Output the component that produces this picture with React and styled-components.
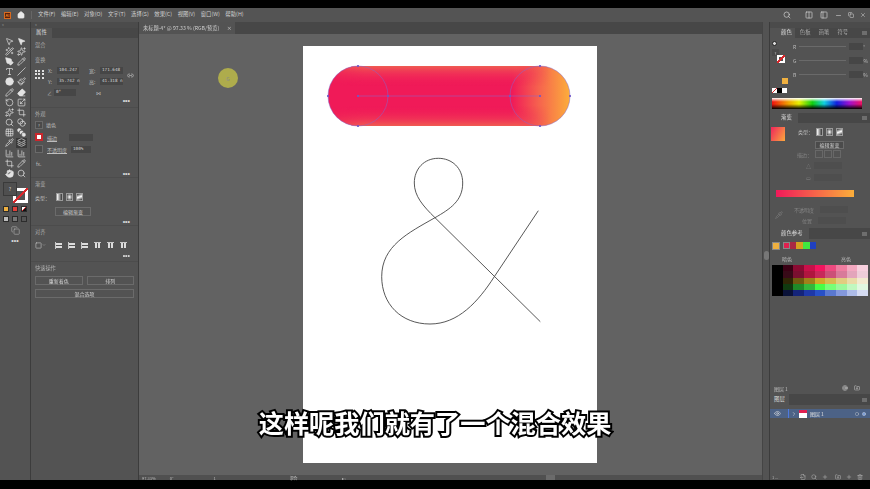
import React from "react"
import styled, { createGlobalStyle } from "styled-components"
import {
  MousePointer2, Wand2, PenTool, Pencil, Type, Slash, Circle, Paintbrush, Eraser, RotateCcw,
  Scaling, Sparkles, Grid3x3, SquareStack, Pipette, Blend, ChartColumn, BarChart3, Crop, Hand, Search,
  Link2, Eye, ChevronRight, ChevronDown, Square, Minus, X, Home, Copy, Columns2, PanelLeft,
  Plus, Trash2, FolderPlus, FileOutput, Layers, Target,
} from "lucide-react"

const GlobalStyle = createGlobalStyle`
  html, body { margin: 0; padding: 0; background: #000; overflow: hidden; }
  * { box-sizing: border-box; }
  body { font-family: "Noto Sans CJK SC", "Liberation Sans", sans-serif; }
`

const Page = styled.div`
  position: relative;
  width: 870px;
  height: 489px;
  display: flex;
  flex-direction: column;
  background: #000;
  overflow: hidden;
`

const Window = styled.div`
  margin-top: 8px;
  height: 472px;
  display: flex;
  flex-direction: column;
  background: #535353;
  color: #c8c8c8;
  font-size: 5px;
  line-height: 1;
  filter: blur(0.3px);
`

const MenuBar = styled.div`
  height: 14px;
  display: flex;
  align-items: center;
  background: #545454;
  padding-left: 4px;
`

const AiLogo = styled.div`
  width: 7px;
  height: 7px;
  background: #5c1f08;
  border: 1px solid #d96a1e;
  color: #f08a2a;
  font-size: 4px;
  font-weight: 700;
  display: flex;
  align-items: center;
  justify-content: center;
`

const HomeWrap = styled.div`
  width: 21px;
  display: flex;
  justify-content: center;
  color: #e8e8e8;
  border-right: 1px solid #666;
  margin-right: 6px;
`

const MenuItem = styled.span`
  margin-right: 5.5px;
  font-size: 5.4px;
  color: #d0d0d0;
  white-space: nowrap;
`

const MenuRight = styled.div`
  margin-left: auto;
  display: flex;
  align-items: center;
  padding-right: 4px;
  color: #d4d4d4;
`

const MenuGroup = styled.div`
  display: flex;
  align-items: center;
  gap: ${p => p.$gap || 5}px;
  margin-right: ${p => p.$right || 0}px;
`

const Body = styled.div`
  flex: 1;
  display: flex;
  min-height: 0;
`

const ToolColumn = styled.div`
  width: 31px;
  background: #535353;
  border-right: 1px solid #3c3c3c;
  display: flex;
  flex-direction: column;
  align-items: center;
`

const CollapseStrip = styled.div`
  height: 6px;
  width: 100%;
  background: #4b4b4b;
  color: #aaa;
  font-size: 4px;
  padding-left: ${p => p.$pad || 2}px;
  letter-spacing: -0.5px;
`

const ToolGrid = styled.div`
  display: grid;
  grid-template-columns: 12px 12px;
  grid-auto-rows: 10.2px;
  margin-top: 8px;
  justify-items: center;
  align-items: center;
  color: #e2e2e2;
`

const ToolBtn = styled.div`
  width: 11px;
  height: 10px;
  display: flex;
  align-items: center;
  justify-content: center;
  background: ${p => (p.$active ? "#3a3a3a" : "transparent")};
`

const FillStroke = styled.div`
  position: relative;
  width: 24px;
  height: 22px;
  margin-top: 3px;
`

const FillBox = styled.div`
  position: absolute;
  left: 0;
  top: 0;
  width: 14px;
  height: 14px;
  background: #4f4f4f;
  border: 1px solid #3a3a3a;
  color: #ccc;
  font-size: 5px;
  display: flex;
  align-items: center;
  justify-content: center;
  z-index: 1;
`

const StrokeBox = styled.div`
  position: absolute;
  right: -1px;
  bottom: 1px;
  width: 15px;
  height: 15px;
  background:
    linear-gradient(135deg, transparent 44%, #d8282c 44%, #d8282c 56%, transparent 56%),
    linear-gradient(#535353, #535353) center / 9px 9px no-repeat,
    #fff;
`

const ModeRow = styled.div`
  display: flex;
  gap: 3px;
  margin-top: ${p => p.$top || 3}px;
`

const ModeBtn = styled.div`
  width: 6px;
  height: 6px;
  border: 1px solid #2c2c2c;
  background: ${p => p.$bg};
`

const ScreenBtn = styled.div`
  margin-top: 4px;
  color: #cfcfcf;
`

const Dots = styled.div`
  height: ${p => p.$h || 8}px;
  display: flex;
  align-items: center;
  justify-content: ${p => p.$center ? "center" : "flex-end"};
  padding-right: ${p => p.$center ? 0 : 4}px;
  color: #d8d8d8;
  font-family: "Liberation Sans", sans-serif;
  font-size: 7px;
  font-weight: 700;
`

const PropsPanel = styled.div`
  width: 108px;
  background: #535353;
  border-right: 1px solid #3c3c3c;
  display: flex;
  flex-direction: column;
`

const TabRow = styled.div`
  height: ${p => p.$h || 11}px;
  margin-top: ${p => p.$top || 0}px;
  display: flex;
  background: #474747;
  flex-shrink: 0;
`

const Tab = styled.div`
  padding: 0 ${p => p.$pad || 4}px 0 ${p => p.$lead || p.$pad || 4}px;
  display: flex;
  align-items: center;
  background: ${p => (p.$on ? "#535353" : "transparent")};
  color: ${p => (p.$on ? "#dedede" : "#a5a5a5")};
  font-size: 5.4px;
`

const PanelMenu = styled.div`
  margin: auto 3px auto auto;
  width: 5px;
  height: 4px;
  background: #6e6e6e;
`

const Section = styled.div`
  height: ${p => p.$h}px;
  padding: ${p => p.$top || 0}px 4px 0 4px;
  border-bottom: ${p => (p.$line ? "1px solid #4c4c4c" : "none")};
`

const Title = styled.div`
  color: #adadad;
  font-size: 5.2px;
  height: 7px;
`

const Row = styled.div`
  display: flex;
  align-items: center;
  gap: ${p => p.$gap || 3}px;
  height: ${p => p.$h || 9}px;
  margin-top: ${p => p.$top || 0}px;
  padding-left: ${p => p.$left || 0}px;
  padding-right: ${p => p.$right || 0}px;
`

const Label = styled.span`
  color: ${p => p.$dim ? "#858585" : "#bdbdbd"};
  font-size: 5px;
  width: ${p => (p.$w ? p.$w + "px" : "auto")};
  margin-left: ${p => p.$ml || 0}px;
  text-decoration: ${p => (p.$under ? "underline" : "none")};
  white-space: nowrap;
`

const Input = styled.div`
  width: ${p => p.$w || 22}px;
  height: ${p => p.$h || 7}px;
  margin-left: ${p => p.$ml || 0}px;
  background: ${p => p.$ghost ? "#4e4e4e" : "#464646"};
  color: #d4d4d4;
  font-family: "DejaVu Sans Mono", monospace;
  font-size: 4.3px;
  white-space: nowrap;
  display: flex;
  align-items: center;
  padding-left: 2px;
`

const RefPoint = styled.div`
  width: 9px;
  height: 9px;
  display: grid;
  grid-template-columns: repeat(3, 1fr);
  gap: 1px;
  align-items: center;
  justify-items: center;
  position: relative;
  top: 5px;
  span { width: 2px; height: 2px; background: #e0e0e0; }
`

const TransformRows = styled.div`
  flex: 1;
`

const TransformWrap = styled.div`
  display: flex;
  gap: 4px;
  margin-top: 1px;
`

const SwatchIcon = styled.div`
  width: 8px;
  height: 8px;
  border: ${p => p.$stroke ? "2px solid #c9262c" : "1px solid #6a6a6a"};
  background: ${p => p.$stroke ? "#fff" : "#4a4a4a"};
  color: #ccc;
  font-size: 4px;
  display: flex;
  align-items: center;
  justify-content: center;
`

const GradType = styled.div`
  width: 7px;
  height: 8px;
  border: 1px solid #9a9a9a;
  background: ${p => p.$bg};
`

const GhostBtn = styled.div`
  height: ${p => p.$h || 9}px;
  width: ${p => (p.$w ? p.$w + "px" : "auto")};
  flex: ${p => (p.$w ? "none" : 1)};
  margin-left: ${p => p.$left || 0}px;
  border: 1px solid #6b6b6b;
  background: ${p => p.$bg || "transparent"};
  color: #d0d0d0;
  font-size: 5px;
  display: flex;
  align-items: center;
  justify-content: center;
`

const AlignIcon = styled.div`
  width: 7px;
  height: 7px;
  display: flex;
  flex-direction: ${p => (p.$v ? "row" : "column")};
  gap: 1px;
  align-items: center;
  justify-content: center;
  border-${p => (p.$v ? "top" : "left")}: 1px solid #c8c8c8;
  i { display: block; background: #dcdcdc; width: ${p => (p.$v ? "2px" : "6px")}; height: ${p => (p.$v ? "5px" : "2px")}; }
`

const Canvas = styled.div`
  flex: 1;
  display: flex;
  flex-direction: column;
  min-width: 0;
  background: #626262;
`

const DocTabs = styled.div`
  height: 12px;
  display: flex;
  background: #474747;
`

const DocTab = styled.div`
  width: 96px;
  background: #535353;
  display: flex;
  align-items: center;
  justify-content: space-between;
  padding: 0 3px 0 4px;
  color: #cfcfcf;
  font-size: 5.2px;
  white-space: nowrap;
`

const Stage = styled.div`
  flex: 1;
  position: relative;
  padding: 12px 0 0 164px;
  min-height: 0;
`

const Artboard = styled.div`
  width: 294px;
  height: 417px;
  background: #fff;
`

const ClickMark = styled.div`
  position: absolute;
  left: 79px;
  top: 34px;
  width: 20px;
  height: 20px;
  border-radius: 50%;
  background: #aeac4c;
  color: #888;
  font-size: 5px;
  display: flex;
  align-items: center;
  justify-content: center;
`

const StatusBar = styled.div`
  height: 5px;
  display: flex;
  align-items: center;
  background: #505050;
  color: #bcbcbc;
  font-size: 4px;
  padding-left: 3px;
`

const StatusText = styled.span`
  margin-right: ${p => p.$right}px;
  white-space: nowrap;
`

const StatusThumb = styled.div`
  width: 9px;
  height: 5px;
  background: #6b6b6b;
`

const Gutter = styled.div`
  width: 7px;
  background: #535353;
  border-left: 1px solid #454545;
  position: relative;
`

const GutterThumb = styled.div`
  position: absolute;
  left: 1px;
  top: 229px;
  width: 5px;
  height: 9px;
  border-radius: 3px;
  background: #777;
`

const RightDock = styled.div`
  width: 101px;
  border-left: 1px solid #3c3c3c;
  background: #535353;
  display: flex;
  flex-direction: column;
`

const ColorHead = styled.div`
  display: flex;
  margin-top: 1px;
`

const ColorIcons = styled.div`
  width: 23px;
  display: flex;
  flex-direction: column;
  padding: 2px 0 0 2px;
`

const FillDot = styled.div`
  width: 5px;
  height: 5px;
  border-radius: 50%;
  background: #ddd;
  border: 1px solid #222;
`

const QuestionBox = styled.div`
  width: 7px;
  height: 7px;
  margin-top: 3px;
  background: #4a4a4a;
  color: #ccc;
  font-size: 4px;
  display: flex;
  align-items: center;
  justify-content: center;
`

const StrokeMini = styled.div`
  width: 8px;
  height: 8px;
  margin: -1px 0 0 5px;
  background:
    linear-gradient(135deg, transparent 38%, #d8282c 38%, #d8282c 62%, transparent 62%),
    linear-gradient(#535353, #535353) center / 4px 4px no-repeat,
    #fff;
`

const Sliders = styled.div`
  flex: 1;
`

const SliderRow = styled.div`
  display: flex;
  align-items: center;
  height: 14px;
`

const SliderTrack = styled.div`
  width: 47px;
  height: 1px;
  background: #6a6a6a;
  margin: 0 3px;
`

const Spectrum = styled.div`
  height: 11px;
  margin: 5px 8px 0 2px;
  background:
    linear-gradient(to bottom, #fff 0, rgba(255,255,255,0) 35%, rgba(0,0,0,0) 55%, #000 100%),
    linear-gradient(to right, #f01010 0, #f0a000 18%, #e8f000 30%, #10d010 45%, #10d0e0 58%, #1020e0 72%, #a010d0 86%, #f01060 100%);
`

const MiniSwatch = styled.div`
  width: ${p => p.$w || 5}px;
  height: ${p => p.$h || 5}px;
  margin-left: ${p => p.$ml || 0}px;
  background: ${p => p.$bg};
  border: ${p => p.$line ? "1px solid #888" : "none"};
`

const GradHead = styled.div`
  display: flex;
  padding: 4px 0 0 1px;
  height: 25px;
`

const GradSwatch = styled.div`
  width: 14px;
  height: 14px;
  background: linear-gradient(120deg, #f0245c, #fba93c);
`

const GradControls = styled.div`
  margin-left: 13px;
`

const GradBar = styled.div`
  margin: 7px 0 7px 6px;
  width: 78px;
  height: 7px;
  background: linear-gradient(90deg, #f0195a, #fbae3a);
`

const FadedBtn = styled.div`
  width: 8px;
  height: 8px;
  border: 1px solid #686868;
`

const PickRows = styled.div`
  display: flex;
  align-items: center;
  height: 21px;
  color: #787878;
  padding-left: 5px;
`

const PickBody = styled.div`
  flex: 1;
  padding-left: 11px;
`

const GuideGrid = styled.div`
  display: grid;
  grid-template-columns: repeat(9, 1fr);
  grid-auto-rows: 6.3px;
  width: 96px;
  margin-left: 2px;
`

const LayerRow = styled.div`
  height: 9px;
  display: flex;
  align-items: center;
  background: #4c6286;
  margin-top: 4px;
  color: #e0e0e0;
  padding-left: 4px;
  font-size: 5px;
`

const LayerBar = styled.div`
  width: 1px;
  height: 9px;
  margin-left: 7px;
  background: #4f7ae0;
`

const LayerThumb = styled.div`
  width: 8px;
  height: 8px;
  background: linear-gradient(#e02050 35%, #fff 35%);
  margin: 0 3px 0 2px;
`

const LayerFoot = styled.div`
  margin-top: auto;
  height: 6px;
  display: flex;
  align-items: center;
  gap: 5px;
  color: #b4b4b4;
  padding-left: 2px;
  font-size: 4px;
`

const Caption = styled.div`
  position: absolute;
  left: 0;
  right: 0;
  top: 405px;
  text-align: center;
  font-family: "Noto Sans CJK SC", sans-serif;
  font-size: 25.2px;
  font-weight: 700;
  line-height: 34px;
  color: #fff;
  -webkit-text-stroke: 4px #000;
  paint-order: stroke fill;
`

const menus = ["文件(F)", "编辑(E)", "对象(O)", "文字(T)", "选择(S)", "效果(C)", "视图(V)", "窗口(W)", "帮助(H)"]

const tools = [
  [MousePointer2], [MousePointer2, true], [Wand2], [Sparkles], [PenTool, true], [Pencil], [Type], [Slash], [Circle, true], [Paintbrush],
  [Pencil], [Eraser, true], [RotateCcw], [Scaling], [Sparkles], [Crop], [Search], [Blend], [Grid3x3], [SquareStack, true],
  [Pipette], [Layers], [BarChart3], [ChartColumn], [Crop], [Pencil], [Hand, true], [Search],
]

const guide = [
  ["#000", "#3a0014", "#8a0a32", "#c8104a", "#f2155f", "#ee4a80", "#ee7da0", "#f3a8c0", "#f7d0de"],
  ["#000", "#380a18", "#7a1030", "#b0153f", "#c8285a", "#cc5078", "#d87a9a", "#e3a5bb", "#eecdd9"],
  ["#000", "#2e2505", "#705a10", "#a0801a", "#d2a928", "#d8bb50", "#e2cc80", "#eadba8", "#f2ead0"],
  ["#000", "#103a10", "#1f8a28", "#35b83c", "#48ff48", "#78ff78", "#9cf89c", "#c0f8c0", "#e0f8e0"],
  ["#000", "#0a1238", "#14247a", "#1e38a8", "#2850c8", "#5a78d0", "#8498dc", "#aebce8", "#d6dcf2"],
]

const gradTypes = [
  "linear-gradient(90deg,#fff,#333)",
  "radial-gradient(#fff,#333)",
  "linear-gradient(160deg,#333,#fff 50%,#333)",
]

const TransformRow = ({ a, av, b, bv }) => (
  <Row $h={11} $gap={2}>
    <Label $w={7}>{a}</Label>
    <Input $w={22}>{av}</Input>
    <Label $w={9} $ml={8}>{b}</Label>
    <Input $w={23}>{bv}</Input>
  </Row>
)

const GradientTypes = () => (
  <>
    {gradTypes.map((g, i) => <GradType key={i} $bg={g} />)}
  </>
)

const ToolPanel = () => (
  <ToolColumn>
    <CollapseStrip>‹‹</CollapseStrip>
    <ToolGrid>
      {tools.map(([Icon, solid], i) => (
        <ToolBtn key={i} $active={i === 21}>
          <Icon size={9} strokeWidth={1.8} fill={solid ? "#e2e2e2" : "none"} />
        </ToolBtn>
      ))}
    </ToolGrid>
    <FillStroke>
      <FillBox>?</FillBox>
      <StrokeBox />
    </FillStroke>
    <ModeRow $top={2}>
      <ModeBtn $bg="#efb040" />
      <ModeBtn $bg="#e0403a" />
      <ModeBtn $bg="linear-gradient(135deg,#fff 45%,#d8282c 45%,#d8282c 55%,#111 55%)" />
    </ModeRow>
    <ModeRow $top={4}>
      <ModeBtn $bg="#bbb" />
      <ModeBtn $bg="#777" />
      <ModeBtn $bg="#555" />
    </ModeRow>
    <ScreenBtn><Copy size={9} strokeWidth={1.2} /></ScreenBtn>
    <Dots $center $h={12}>•••</Dots>
  </ToolColumn>
)

const AlignRow = () => (
  <Row $h={12} $top={3} $gap={6} $left={0}>
    <Square size={7} />
    <ChevronDown size={4} style={{ marginLeft: -6, marginRight: 3 }} />
    {[0, 0, 0, 1, 1, 1].map((v, i) => (
      <AlignIcon key={i} $v={v}><i /><i /></AlignIcon>
    ))}
  </Row>
)

const Properties = () => (
  <PropsPanel>
    <CollapseStrip $pad={4}>‹‹</CollapseStrip>
    <TabRow $h={10}>
      <Tab $on $pad={5}>属性</Tab>
    </TabRow>
    <Section $h={15} $top={4}>
      <Title>混合</Title>
    </Section>
    <Section $h={55} $top={4} $line>
      <Title>变换</Title>
      <TransformWrap>
        <RefPoint>{Array.from({ length: 9 }).map((_, i) => <span key={i} />)}</RefPoint>
        <TransformRows>
          <TransformRow a="X:" av="104.247" b="宽:" bv="171.648" />
          <TransformRow a="Y:" av="35.742 n" b="高:" bv="41.318 n" />
        </TransformRows>
        <Link2 size={7} style={{ marginTop: 7 }} />
      </TransformWrap>
      <Row $h={10} $left={12} $gap={2}>
        <Label>∠</Label>
        <Input $w={22}>0°</Input>
        <Label $ml={18}>⋈</Label>
      </Row>
      <Dots $h={7}>•••</Dots>
    </Section>
    <Section $h={70} $top={3} $line>
      <Title>外观</Title>
      <Row $h={11} $top={1}>
        <SwatchIcon>?</SwatchIcon>
        <Label>填色</Label>
      </Row>
      <Row $h={12} $top={1} $gap={4}>
        <SwatchIcon $stroke />
        <Label $under>描边</Label>
        <Input $w={24} $h={7} $ml={8} />
      </Row>
      <Row $h={12} $gap={4}>
        <SwatchIcon />
        <Label $under>不透明度</Label>
        <Input $w={20} $h={7}>100%</Input>
      </Row>
      <Row $h={12} $top={2} $left={1}><Label>fx.</Label></Row>
      <Dots $h={8}>•••</Dots>
    </Section>
    <Section $h={48} $top={3} $line>
      <Title>渐变</Title>
      <Row $h={14} $top={2} $gap={3}>
        <Label style={{ marginRight: 3 }}>类型：</Label>
        <GradientTypes />
      </Row>
      <Row $h={14}><GhostBtn $w={36} $left={20}>编辑渐变</GhostBtn></Row>
      <Dots $h={7}>•••</Dots>
    </Section>
    <Section $h={36} $top={3} $line>
      <Title>对齐</Title>
      <AlignRow />
      <Dots $h={9}>•••</Dots>
    </Section>
    <Section $h={50} $top={3}>
      <Title>快速操作</Title>
      <Row $h={9} $top={4} $gap={4}>
        <GhostBtn>重新着色</GhostBtn>
        <GhostBtn>排列</GhostBtn>
      </Row>
      <Row $h={9} $top={4}><GhostBtn>混合选项</GhostBtn></Row>
    </Section>
  </PropsPanel>
)

const PillArt = () => (
  <svg width="294" height="417" viewBox="0 0 294 417" style={{ display: "block" }}>
    <defs>
      <linearGradient id="base" x1="0" x2="1" y1="0" y2="0">
        <stop offset="0" stopColor="#f01a58" />
        <stop offset="0.76" stopColor="#f01a58" />
        <stop offset="0.87" stopColor="#f6624e" />
        <stop offset="1" stopColor="#fcae3b" />
      </linearGradient>
      <linearGradient id="edge" x1="0" x2="0" y1="0" y2="1">
        <stop offset="0" stopColor="#ef5c52" />
        <stop offset="0.12" stopColor="#f03c56" stopOpacity="0.7" />
        <stop offset="0.34" stopColor="#f01a58" stopOpacity="0" />
        <stop offset="0.66" stopColor="#f01a58" stopOpacity="0" />
        <stop offset="0.88" stopColor="#f03c56" stopOpacity="0.7" />
        <stop offset="1" stopColor="#ef5c52" />
      </linearGradient>
      <linearGradient id="fade" x1="0" x2="1" y1="0" y2="0">
        <stop offset="0" stopColor="#fff" stopOpacity="0.5" />
        <stop offset="0.15" stopColor="#fff" />
        <stop offset="0.78" stopColor="#fff" />
        <stop offset="0.92" stopColor="#fff" stopOpacity="0" />
      </linearGradient>
      <mask id="edgeMask"><rect x="25" y="20" width="242" height="60" fill="url(#fade)" /></mask>
    </defs>
    <rect x="25" y="20" width="242" height="60" rx="30" fill="url(#base)" />
    <rect x="25" y="20" width="242" height="60" rx="30" fill="url(#edge)" mask="url(#edgeMask)" />
    <g fill="none" stroke="#8468d0" strokeWidth="0.7" opacity="0.7">
      <circle cx="55" cy="50" r="30" />
      <circle cx="237" cy="50" r="30" />
      <path d="M55 50H237" />
    </g>
    <g fill="#6f58c8" opacity="0.85">
      {[[55, 20], [55, 80], [25, 50], [85, 50], [55, 50], [237, 20], [237, 80], [207, 50], [267, 50], [237, 50]].map(([x, y]) => (
        <rect key={x + "-" + y} x={x - 1} y={y - 1} width="2" height="2" />
      ))}
    </g>
    <path
      d="M235.3 164.7 L191.3 230.7 C175 256 155 278 127 278 C98 278 78.7 258 78.7 230.7 C78.7 200 105 187 132 171.7 C147 163 159.7 155 159.7 137 C159.7 122 149 112.3 135.3 112.3 C121 112.3 111.3 123 111.3 137 C111.3 150 120 160 132 171.7 L237.3 275.7"
      fill="none"
      stroke="#444"
      strokeWidth="0.9"
    />
  </svg>
)

const ColorPanel = () => (
  <>
    <CollapseStrip />
    <TabRow $h={10}>
      <Tab $on $lead={11} $pad={3}>颜色</Tab>
      <Tab $pad={5}>色板</Tab>
      <Tab $pad={3}>画笔</Tab>
      <Tab $pad={5}>符号</Tab>
      <PanelMenu />
    </TabRow>
    <ColorHead>
      <ColorIcons>
        <FillDot />
        <QuestionBox>?</QuestionBox>
        <StrokeMini />
      </ColorIcons>
      <Sliders>
        <SliderRow><Label>R</Label><SliderTrack /><Input $w={14} $h={7} /><Label> °</Label></SliderRow>
        <SliderRow><Label>G</Label><SliderTrack /><Input $w={14} $h={7} /><Label> %</Label></SliderRow>
        <SliderRow><Label>B</Label><SliderTrack /><Input $w={14} $h={7} /><Label> %</Label></SliderRow>
      </Sliders>
    </ColorHead>
    <Row $h={6} $top={-3} $left={12}><MiniSwatch $w={6} $h={6} $bg="#efb040" /></Row>
    <Row $h={6} $top={3} $gap={0.1} $left={2}>
      <MiniSwatch $w={5} $h={5} $bg="linear-gradient(135deg,#fff 45%,#d8282c 45%,#d8282c 55%,#fff 55%)" />
      <MiniSwatch $w={5} $h={5} $bg="#000" />
      <MiniSwatch $w={5} $h={5} $bg="#fff" />
    </Row>
    <Spectrum />
  </>
)

const GradientPanel = () => (
  <>
    <TabRow $h={10} $top={4}>
      <Tab $on $lead={11} $pad={6}>渐变</Tab>
      <PanelMenu />
    </TabRow>
    <GradHead>
      <GradSwatch />
      <GradControls>
        <Row $h={9} $gap={3}>
          <Label>类型：</Label>
          <GradientTypes />
        </Row>
        <Row $h={11} $top={3} $left={17}>
          <GhostBtn $w={29} $h={8} $bg="#4b4b4b">编辑渐变</GhostBtn>
        </Row>
      </GradControls>
    </GradHead>
    <Row $h={12} $left={27} $gap={1}>
      <Label $dim>描边：</Label>
      <FadedBtn style={{ marginLeft: 2 }} /><FadedBtn /><FadedBtn />
    </Row>
    <Row $h={11} $left={36}><Label $dim>△</Label><Input $ghost $w={28} $h={7} /></Row>
    <Row $h={12} $left={36}><Label $dim>▭</Label><Input $ghost $w={28} $h={7} /></Row>
    <GradBar />
    <PickRows>
      <Pipette size={8} />
      <PickBody>
        <Row $h={11}><Label $dim>不透明度</Label><Input $ghost $w={28} $h={7} $ml={3} /></Row>
        <Row $h={10} $left={8}><Label $dim>位置</Label><Input $ghost $w={28} $h={7} $ml={3} /></Row>
      </PickBody>
    </PickRows>
  </>
)

const GuidePanel = () => (
  <>
    <TabRow $h={11} $top={3}>
      <Tab $on $lead={11} $pad={6}>颜色参考</Tab>
      <PanelMenu />
    </TabRow>
    <Row $h={13} $gap={3} $left={2}>
      <MiniSwatch $w={8} $h={8} $bg="#efb040" $line />
      <MiniSwatch $w={7} $h={7} $bg="#e0204f" $line />
      <MiniSwatch $w={6} $h={7} $bg="#a82a44" $ml={-3} />
      <MiniSwatch $w={7} $h={7} $bg="#d6a020" $ml={-3} />
      <MiniSwatch $w={7} $h={7} $bg="#40e840" $ml={-3} />
      <MiniSwatch $w={6} $h={7} $bg="#2040c0" $ml={-3} />
    </Row>
    <Row $h={13} $left={12}>
      <Label>暗色</Label>
      <Label $ml={46}>亮色</Label>
    </Row>
    <GuideGrid>
      {guide.flat().map((c, i) => <MiniSwatch key={i} $w={10.67} $h={6.3} $bg={c} />)}
    </GuideGrid>
  </>
)

const LayersPanel = () => (
  <>
    <Row $h={10} $left={4} $right={10} style={{ marginTop: "auto" }}>
      <Label>图层 1</Label>
      <Target size={6} style={{ marginLeft: "auto", marginRight: 3 }} />
      <FolderPlus size={6} />
    </Row>
    <TabRow $h={11} $top={1}>
      <Tab $on $pad={4}>图层</Tab>
      <PanelMenu />
    </TabRow>
    <LayerRow>
      <Eye size={7} />
      <LayerBar />
      <ChevronRight size={6} style={{ marginLeft: 2 }} />
      <LayerThumb />
      图层 1
      <Circle size={4} style={{ marginLeft: "auto", marginRight: 3 }} />
      <Circle size={4} fill="#7ea0d8" style={{ marginRight: 4 }} />
    </LayerRow>
    <LayerFoot style={{ marginTop: 56 }}>
      <span>1 ...</span>
      <FileOutput size={6} style={{ marginLeft: 17 }} />
      <Search size={6} />
      <Plus size={6} />
      <FolderPlus size={6} style={{ marginLeft: 2 }} />
      <Plus size={6} />
      <Trash2 size={6} />
    </LayerFoot>
  </>
)

const App = () => {
  return (
    <Page>
      <GlobalStyle />
      <Window>
        <MenuBar>
          <AiLogo>Ai</AiLogo>
          <HomeWrap><Home size={8} fill="#e8e8e8" /></HomeWrap>
          {menus.map(m => <MenuItem key={m}>{m}</MenuItem>)}
          <MenuRight>
            <MenuGroup $right={14}><Search size={8} /></MenuGroup>
            <MenuGroup $gap={7} $right={7}><Columns2 size={8} /><PanelLeft size={8} /></MenuGroup>
            <MenuGroup $gap={6}><Minus size={7} /><Copy size={6} /><X size={6} /></MenuGroup>
          </MenuRight>
        </MenuBar>
        <Body>
          <ToolPanel />
          <Properties />
          <Canvas>
            <DocTabs>
              <DocTab>未标题-4* @ 97.33 % (RGB/预览) <span>×</span></DocTab>
            </DocTabs>
            <Stage>
              <Artboard><PillArt /></Artboard>
              <ClickMark>G</ClickMark>
            </Stage>
            <StatusBar>
              <StatusText $right={14}>97.33%</StatusText>
              <StatusText $right={40}>0°</StatusText>
              <StatusText $right={74}>1</StatusText>
              <StatusText $right={44}>混合</StatusText>
              <StatusText $right={200}>▸ ‹</StatusText>
              <StatusThumb />
            </StatusBar>
          </Canvas>
          <Gutter><GutterThumb /></Gutter>
          <RightDock>
            <ColorPanel />
            <GradientPanel />
            <GuidePanel />
            <LayersPanel />
          </RightDock>
        </Body>
      </Window>
      <Caption>这样呢我们就有了一个混合效果</Caption>
    </Page>
  )
}

export default App
